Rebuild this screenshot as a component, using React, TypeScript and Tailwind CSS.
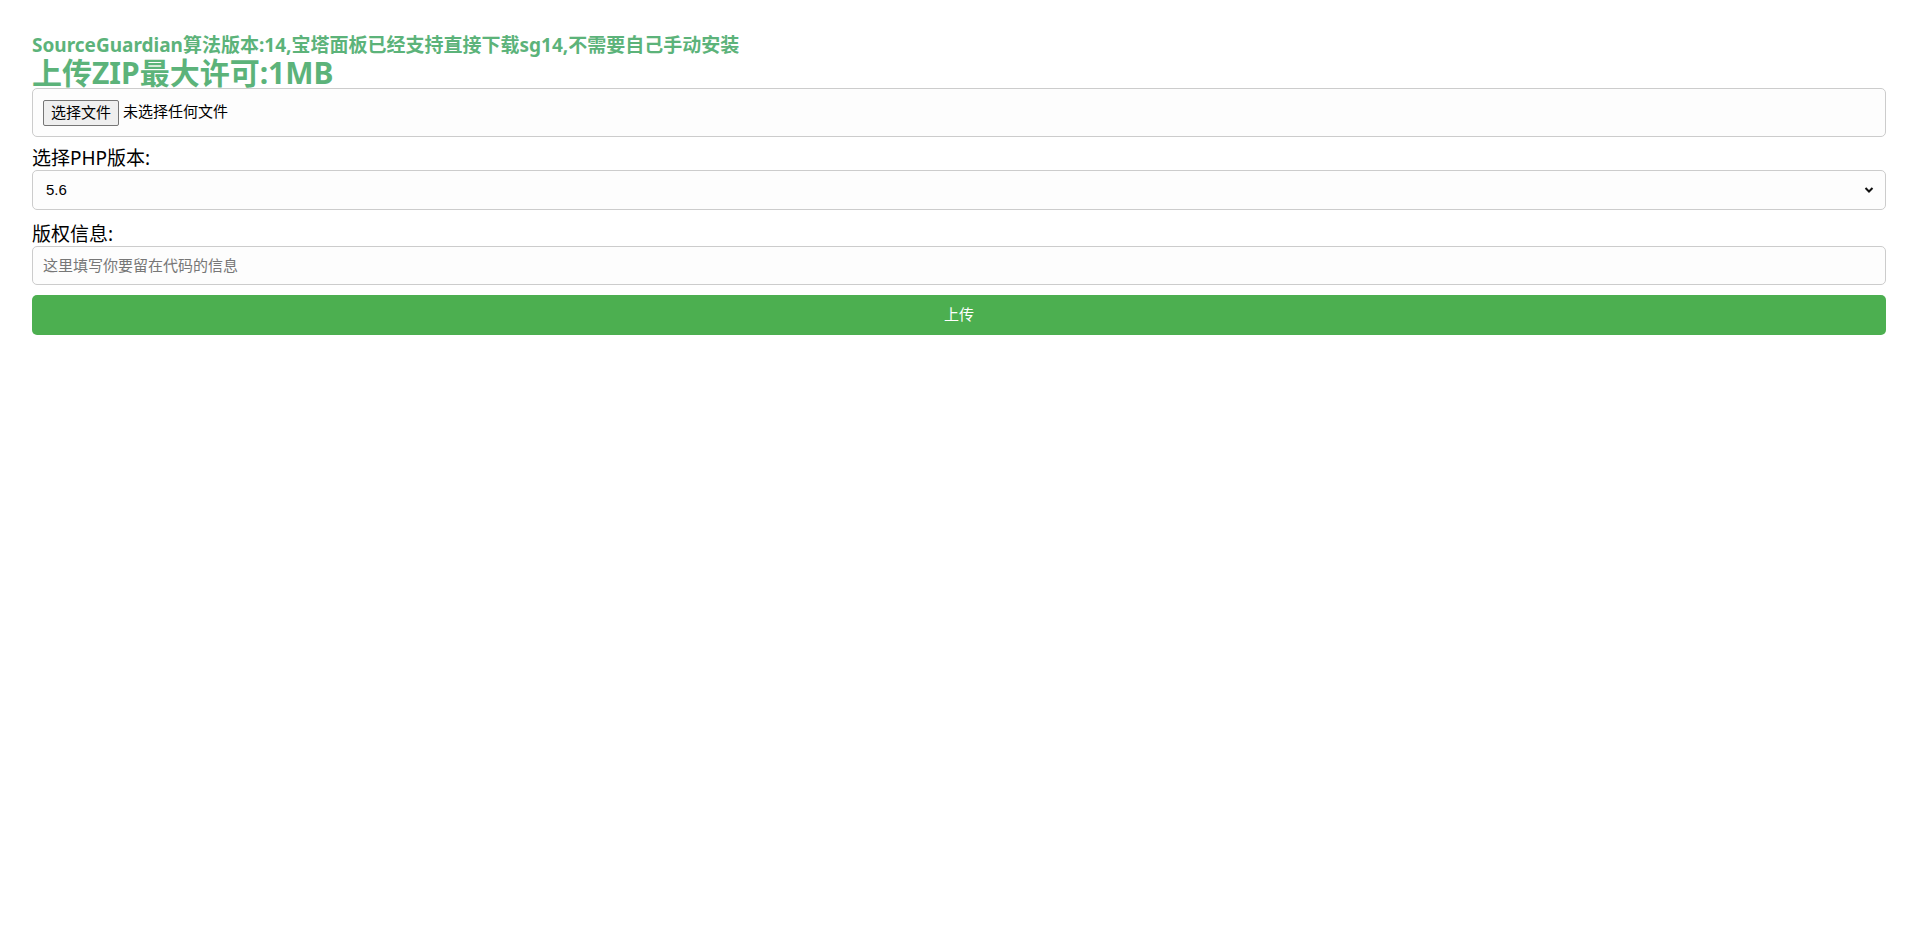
import React from "react";

const font = { fontFamily: '"Noto Sans", "Noto Sans CJK SC", sans-serif' };
const ctl = { fontFamily: '"Liberation Sans", "Noto Sans CJK SC", sans-serif' };

export default function App() {
  return (
    <div className="min-h-[940px] w-full bg-white px-[32px] pt-[33px] text-black" style={font}>
      <div className="text-[19px] font-bold leading-[24px] text-[#5cb37a]">
        SourceGuardian算法版本:14,宝塔面板已经支持直接下载sg14,不需要自己手动安装
      </div>
      <div className="text-[30px] font-bold leading-[31px] text-[#5cb37a]">上传ZIP最大许可:1MB</div>
      <div className="flex h-[49px] items-center rounded-[5px] border border-[#cccccc] bg-[#fdfdfd] px-[10px]" style={ctl}>
        <span className="flex h-[26px] items-center rounded-[2px] border border-[#767676] bg-[#efefef] px-[7px] text-[15px] leading-none text-black">
          选择文件
        </span>
        <span className="ml-[4px] text-[15px] text-black">未选择任何文件</span>
      </div>
      <div className="mt-[9px] text-[19px] leading-[24px]">选择PHP版本:</div>
      <div className="relative">
        <select
          className="h-[40px] w-full appearance-none rounded-[5px] border border-[#cccccc] bg-[#fdfdfd] pl-[13px] text-[15px] outline-none"
          style={ctl}
        >
          <option>5.6</option>
        </select>
        <svg className="pointer-events-none absolute right-[12px] top-[15px]" width="10" height="10" viewBox="0 0 10 10">
          <path d="M1.5 3 L5 6.5 L8.5 3" stroke="#111" strokeWidth="2" fill="none" />
        </svg>
      </div>
      <div className="mt-[12px] text-[19px] leading-[24px]">版权信息:</div>
      <input
        className="h-[39px] w-full rounded-[5px] border border-[#cccccc] bg-[#fdfdfd] px-[10px] text-[15px] outline-none placeholder:text-[#777777]"
        style={ctl}
        placeholder="这里填写你要留在代码的信息"
      />
      <button
        className="mt-[10px] flex h-[40px] w-full items-center justify-center rounded-[5px] bg-[#4caf50] text-[15px] text-white"
        style={ctl}
      >
        上传
      </button>
    </div>
  );
}
